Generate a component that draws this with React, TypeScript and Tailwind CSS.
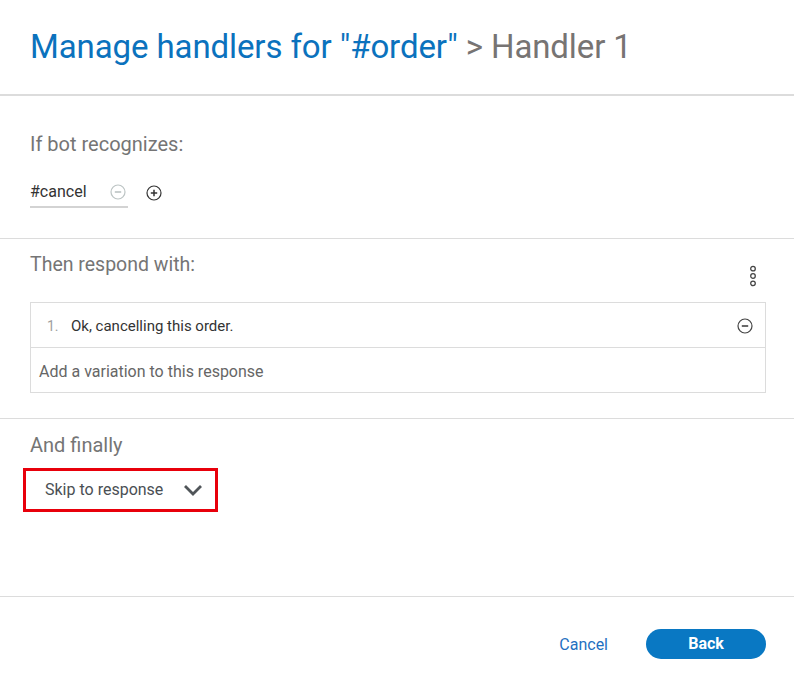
import React from 'react';

const MinusCircle = ({ className }: { className?: string }) => (
  <svg viewBox="0 0 16 16" className={className} fill="none" stroke="currentColor" strokeWidth="1.2">
    <circle cx="8" cy="8" r="7" />
    <line x1="4.8" y1="8" x2="11.2" y2="8" strokeWidth="1.6" />
  </svg>
);

const PlusCircle = ({ className }: { className?: string }) => (
  <svg viewBox="0 0 16 16" className={className} fill="none" stroke="currentColor" strokeWidth="1.2">
    <circle cx="8" cy="8" r="7" />
    <line x1="4.8" y1="8" x2="11.2" y2="8" strokeWidth="1.5" />
    <line x1="8" y1="4.8" x2="8" y2="11.2" strokeWidth="1.5" />
  </svg>
);

const Kebab = () => (
  <svg viewBox="0 0 8 24" className="h-[22px] w-[8px]" fill="none" stroke="#444" strokeWidth="1.4">
    <circle cx="4" cy="4" r="2.5" />
    <circle cx="4" cy="12" r="2.5" />
    <circle cx="4" cy="20" r="2.5" />
  </svg>
);

const Chevron = () => (
  <svg viewBox="0 0 20 12" className="h-[12px] w-[20px]" fill="none" stroke="#505559" strokeWidth="2.8">
    <polyline points="2,2 10,10 18,2" />
  </svg>
);

export default function App() {
  return (
    <div className="flex h-[699px] w-[794px] flex-col bg-white font-['Roboto',sans-serif]">
      {/* header */}
      <div className="flex h-[96px] items-center border-b-2 border-[#dcdcdc] px-[30px] pb-[2px]">
        <h1 className="text-[33px] leading-none tracking-[-0.1px]">
          <span className="text-[#0b72bd]">Manage handlers for "#order"</span>
          <span className="text-[#777473]"> &gt; Handler 1</span>
        </h1>
      </div>

      {/* if bot recognizes */}
      <div className="h-[143px] border-b border-[#dcdcdc] px-[30px] pt-[37px]">
        <div className="text-[20px] leading-[22px] text-[#757575]">If bot recognizes:</div>
        <div className="mt-[23px] flex items-center">
          <div className="flex h-[30px] w-[98px] items-center justify-between border-b-2 border-[#d3d3d3] pr-[2px]">
            <span className="text-[16px] text-[#333]">#cancel</span>
            <MinusCircle className="h-[16px] w-[16px] text-[#bcc4c4]" />
          </div>
          <PlusCircle className="ml-[18px] h-[16px] w-[16px] text-[#333]" />
        </div>
      </div>

      {/* then respond with */}
      <div className="h-[180px] border-b border-[#dcdcdc] pl-[30px] pr-[28px] pt-[15px]">
        <div className="flex items-start justify-between pr-[9px]">
          <div className="text-[19.5px] leading-[22px] text-[#757575]">Then respond with:</div>
          <div className="pt-[11px]">
            <Kebab />
          </div>
        </div>
        <div className="mt-[15px] border border-[#dcdcdc]">
          <div className="flex h-[45px] items-center justify-between border-b border-[#dcdcdc] pl-[16px] pr-[12px] pt-[2px]">
            <div className="flex items-baseline">
              <span className="w-[24px] text-[14px] text-[#a0a0a0]">1.</span>
              <span className="text-[15px] text-[#333]">Ok, cancelling this order.</span>
            </div>
            <MinusCircle className="h-[16px] w-[16px] text-[#444]" />
          </div>
          <div className="flex h-[44px] items-center pl-[8px] pt-[4px] text-[16px] text-[#666]">
            Add a variation to this response
          </div>
        </div>
      </div>

      {/* and finally */}
      <div className="h-[178px] border-b border-[#dcdcdc] px-[23px] pt-[15px]">
        <div className="pl-[7px] text-[20px] leading-[22px] text-[#757575]">And finally</div>
        <div className="mt-[12px] flex h-[44px] w-[195px] items-center justify-between border-[3px] border-[#e8000b] pl-[19px] pr-[12px]">
          <span className="text-[16px] text-[#4a4f54]">Skip to response</span>
          <Chevron />
        </div>
      </div>

      {/* footer */}
      <div className="flex flex-1 items-start justify-end gap-[38px] px-[28px] pt-[32px]">
        <button className="mt-[4px] text-[16px] text-[#1f70c1]">Cancel</button>
        <button className="h-[30px] w-[120px] rounded-full bg-[#0978c3] text-[16px] font-bold text-white">
          Back
        </button>
      </div>
    </div>
  );
}
